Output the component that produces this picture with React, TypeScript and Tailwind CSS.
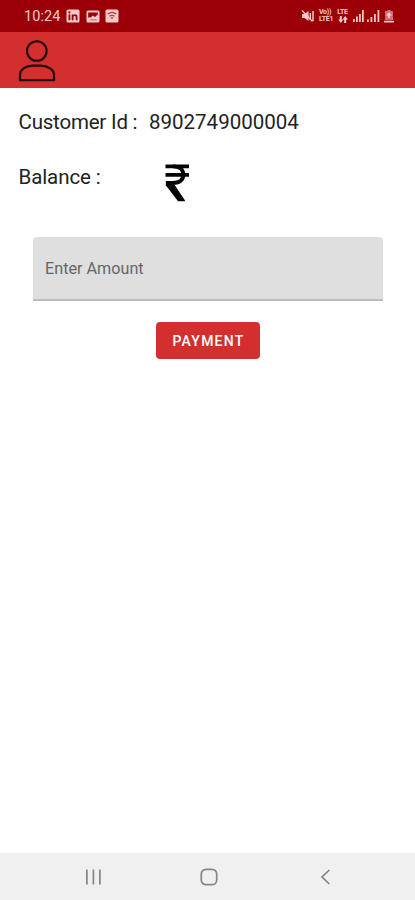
import React, { useState } from 'react';

const StatusBar: React.FC = () => (
  <div className="flex h-8 items-center justify-between bg-[#9b0007] pl-6 pr-[21px] text-[#f5c9c9]">
    <div className="flex items-center">
      <span className="w-[37px] whitespace-nowrap pt-0.5 text-[14.5px] leading-none tracking-[0.1px]">10:24</span>

      {/* Notification icons */}
      <svg className="ml-[5px] h-[14px] w-[14px]" viewBox="0 0 14 14">
        <rect x="0.5" y="0.5" width="13" height="13" rx="1.5" fill="currentColor" />
        <g fill="#9b0007">
          <rect x="2.5" y="5.4" width="1.8" height="5.8" />
          <circle cx="3.4" cy="3.4" r="1.1" />
          <path d="M5.7 5.4h1.7v.8c.4-.6 1-.9 1.8-.9 1.6 0 2.3 1 2.3 2.7v3.2H9.7V8.3c0-.9-.3-1.4-1-1.4-.8 0-1.2.5-1.2 1.4v2.9H5.7z" />
        </g>
      </svg>
      <svg className="ml-1.5 h-[13px] w-[14px]" viewBox="0 0 14 13">
        <rect x="0.5" y="0.5" width="13" height="12" rx="1.5" fill="currentColor" />
        <path d="M2.2 2.5h9.6v2L9 7 6.8 5.6 4.6 7.8 3.5 7 2.2 8z" fill="#9b0007" />
        <path d="M3 10.5l2-1.6h5l1.5 1.6z" fill="#b93c40" opacity="0.5" />
      </svg>
      <svg className="ml-[5px] h-[14px] w-[14px]" viewBox="0 0 14 14">
        <rect x="0.5" y="0.5" width="13" height="13" rx="1.5" fill="currentColor" />
        <path d="M2.7 5c2.6-2 6-2 8.6 0M4.5 7.2c1.6-1.1 3.4-1.1 5 0" stroke="#b93c40" strokeWidth="1.3" fill="none" />
        <path d="M5.5 8.3h3L7 10.5z" fill="#b93c40" />
      </svg>
    </div>

    <div className="flex items-center">
      {/* Muted */}
      <svg className="h-[14px] w-[13px]" viewBox="0 0 13 14" fill="none" stroke="currentColor">
        <path d="M1 5h2.5L7.5 2v10l-4-3H1z" fill="currentColor" stroke="none" />
        <path d="M9.3 4v7M12 2v10" strokeWidth="1.5" />
        <path d="M1 1.5l10.5 11" strokeWidth="1.3" />
      </svg>
      <div className="ml-[5px] flex w-[14px] flex-col text-[7px] font-bold leading-[7px] tracking-[-0.3px]">
        <span>Vo))</span>
        <span>LTE1</span>
      </div>
      <div className="ml-[3px] flex w-[13px] flex-col items-center text-[7px] font-bold leading-[7px] tracking-[-0.2px]">
        <span>LTE</span>
        <svg className="h-[7px] w-[10px]" viewBox="0 0 10 7" fill="currentColor">
          <path d="M1.8 0h2v3.6h1.6L2.8 7 .2 3.6h1.6zM6.2 7h2V3.4h1.6L7.2 0 4.6 3.4h1.6z" />
        </svg>
      </div>
      <svg className="ml-1 h-3 w-[11px]" viewBox="0 0 11 12" fill="currentColor">
        <path d="M0 9h1.8v3H0zM3 6.5h1.8V12H3zM6 4h1.8v8H6zM9 0h1.8v12H9z" />
      </svg>
      <svg className="ml-[3px] h-3 w-[13px]" viewBox="0 0 13 12" fill="currentColor">
        <path d="M0 9.5h1.8V12H0zM3.5 7h1.8v5H3.5zM7 4h1.8v8H7zM10.5 0h1.8v12h-1.8z" />
      </svg>
      <svg className="ml-1 h-[13px] w-[10px]" viewBox="0 0 10 13" fill="currentColor">
        <path d="M3.3 0h3.4v1H9v9H1V1h2.3z" opacity="0.55" />
        <path d="M5 2l3 3.5H6V8H4V5.5H2zM0 10.7h10v1.8H0z" />
      </svg>
    </div>
  </div>
);

const AppBar: React.FC = () => (
  <header className="flex h-14 items-start bg-[#d32f2f] pl-[18px] pt-2">
    <svg className="h-[42px] w-[38px]" viewBox="0 0 38 42" fill="none" stroke="#210607" strokeWidth="2.1">
      <circle cx="18.8" cy="11" r="9.8" />
      <path d="M2 40.2v-5.7c0-4.4 5.7-8.9 12.2-8.9h9.2c6.5 0 12.6 4.5 12.6 8.9v5.7z" />
    </svg>
  </header>
);

const NavigationBar: React.FC = () => (
  <nav className="flex h-[47px] items-center bg-[#f0f0f0] pl-[85px] pt-px text-[#858585]">
    <svg className="h-4 w-4" viewBox="0 0 16 16" stroke="currentColor" strokeWidth="1.7">
      <path d="M1.9 0.5v15M8.4 0.5v15M14.9 0.5v15" />
    </svg>
    <svg className="ml-[99px] h-[18px] w-[18px]" viewBox="0 0 18 18" fill="none" stroke="currentColor" strokeWidth="1.7">
      <rect x="1.3" y="1.3" width="15.4" height="15.4" rx="4.8" />
    </svg>
    <svg className="ml-[102px] h-4 w-[11px]" viewBox="0 0 11 16" fill="none" stroke="currentColor" strokeWidth="1.7">
      <path d="M9.3 1L2 8l7.3 7" />
    </svg>
  </nav>
);

export default function App() {
  const [amount, setAmount] = useState('');

  return (
    <div className="flex h-[900px] w-full flex-col overflow-hidden bg-white font-[Roboto,sans-serif] text-[#222222]">
      <StatusBar />
      <AppBar />

      <main className="flex flex-1 flex-col">
        {/* Customer details */}
        <div className="mt-[22px] flex h-6 items-center pl-[18.5px] text-[20.5px] leading-6">
          <span className="w-[130.5px] whitespace-nowrap tracking-[-0.2px]">Customer Id :</span>
          <span>8902749000004</span>
        </div>
        <div className="mt-[26px] flex h-[46px] items-start pl-[18.5px] text-[20.5px]">
          <span className="mt-[5px] w-[146.5px] leading-6 tracking-[-0.1px]">Balance :</span>
          <svg className="mt-[4px] h-[38px] w-[25px]" viewBox="0 0 25 38" fill="none" stroke="#050505">
            <path d="M0.5 2.4h23.5M0.5 10.9h23.5" strokeWidth="3.6" />
            <path d="M8 2.4c7 0 10.3 3.4 10.3 8.3 0 5-3.5 8.2-10.3 8.2H1" strokeWidth="3.9" />
            <path d="M0.8 17H7l13 19.5v.7h-7L0.8 21.3z" fill="#050505" stroke="none" />
          </svg>
        </div>

        {/* Amount field */}
        <input
          className="ml-[32.5px] mr-8 mt-[31px] h-[64px] rounded-t-[4px] border-b-2 border-[#bcbcbc] bg-[#dfdfdf] px-[12.5px] pt-px text-[16.2px] text-[#333333] outline-none placeholder:text-[#666666]"
          placeholder="Enter Amount"
          inputMode="numeric"
          value={amount}
          onChange={e => setAmount(e.target.value)}
        />

        <button className="ml-[156px] mt-[21px] h-[37px] w-[104px] rounded-[4px] bg-[#d32f2f] pl-px pt-0.5 text-[14px] font-medium tracking-[1.25px] text-white">
          PAYMENT
        </button>
      </main>

      <NavigationBar />
    </div>
  );
}
